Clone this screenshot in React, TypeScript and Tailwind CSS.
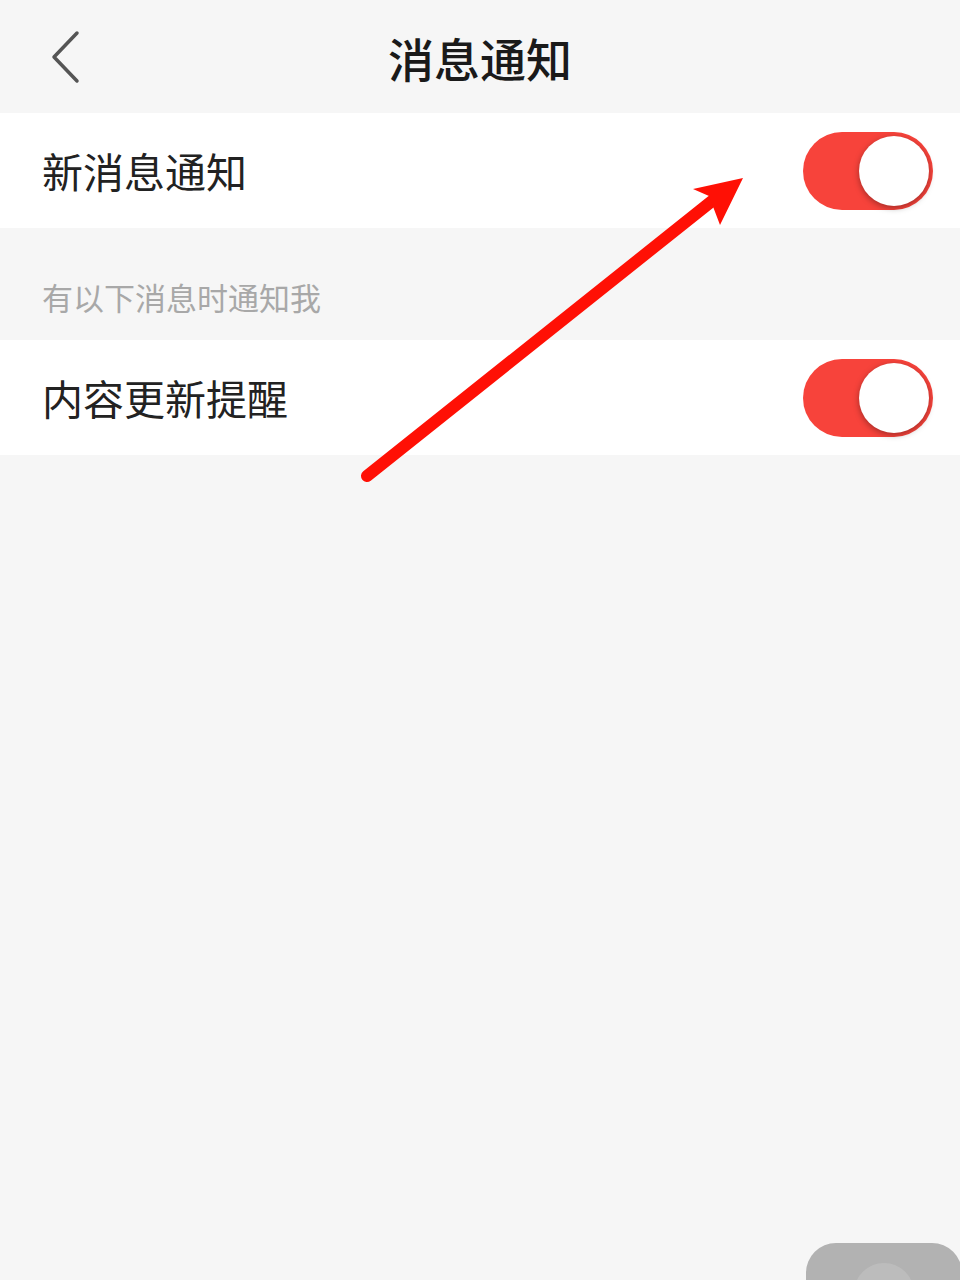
import React from "react";

function Toggle({ on = true }: { on?: boolean }) {
  return (
    <div
      className={`relative h-[78px] w-[130px] rounded-full ${on ? "bg-[#f7433b]" : "bg-[#e5e5e5]"}`}
    >
      <div
        className={`absolute top-[4px] h-[70px] w-[70px] rounded-full bg-white shadow-[0_2px_6px_rgba(0,0,0,0.35)] ${on ? "right-[4px]" : "left-[4px]"}`}
      />
    </div>
  );
}

function SettingRow({ label }: { label: string }) {
  return (
    <div className="flex h-[115px] items-center justify-between bg-white pl-[42px] pr-[27px]">
      <span className="text-[41px] leading-none text-[#222]">{label}</span>
      <Toggle />
    </div>
  );
}

export default function App() {
  return (
    <div
      className="relative h-[1280px] w-[960px] overflow-hidden bg-[#f6f6f6]"
      style={{ fontFamily: '"Noto Sans CJK SC", "Noto Sans", sans-serif' }}
    >
      {/* top bar */}
      <header className="relative flex h-[113px] items-center justify-center">
        <button className="absolute left-[41px] top-[22px] p-2" aria-label="返回">
          <svg width="32" height="56" viewBox="0 0 32 56" fill="none">
            <path d="M28 3 L5 27 L28 51" stroke="#555" strokeWidth="3.5" strokeLinecap="round" strokeLinejoin="round" />
          </svg>
        </button>
        <h1 className="text-[46px] font-medium leading-none text-[#1a1a1a]">消息通知</h1>
      </header>

      <SettingRow label="新消息通知" />

      <div className="flex h-[112px] items-end pb-[28px] pl-[42px]">
        <span className="text-[31px] leading-none text-[#a8a8a8]">有以下消息时通知我</span>
      </div>

      <SettingRow label="内容更新提醒" />

      {/* red annotation arrow */}
      <svg className="pointer-events-none absolute left-0 top-0" width="960" height="1280">
        <line x1="367" y1="476" x2="712" y2="201" stroke="#ff1005" strokeWidth="12" strokeLinecap="round" />
        <polygon points="743,178 693,189 709,196 720,225" fill="#ff1005" />
      </svg>

      {/* floating button peeking at the bottom edge */}
      <div className="absolute left-[806px] top-[1243px] flex h-[90px] w-[156px] items-start justify-center rounded-[30px] bg-[#b2b2b2]">
        <div className="mt-[20px] h-[60px] w-[60px] rounded-full bg-[#bcbcbc]" />
      </div>
    </div>
  );
}
